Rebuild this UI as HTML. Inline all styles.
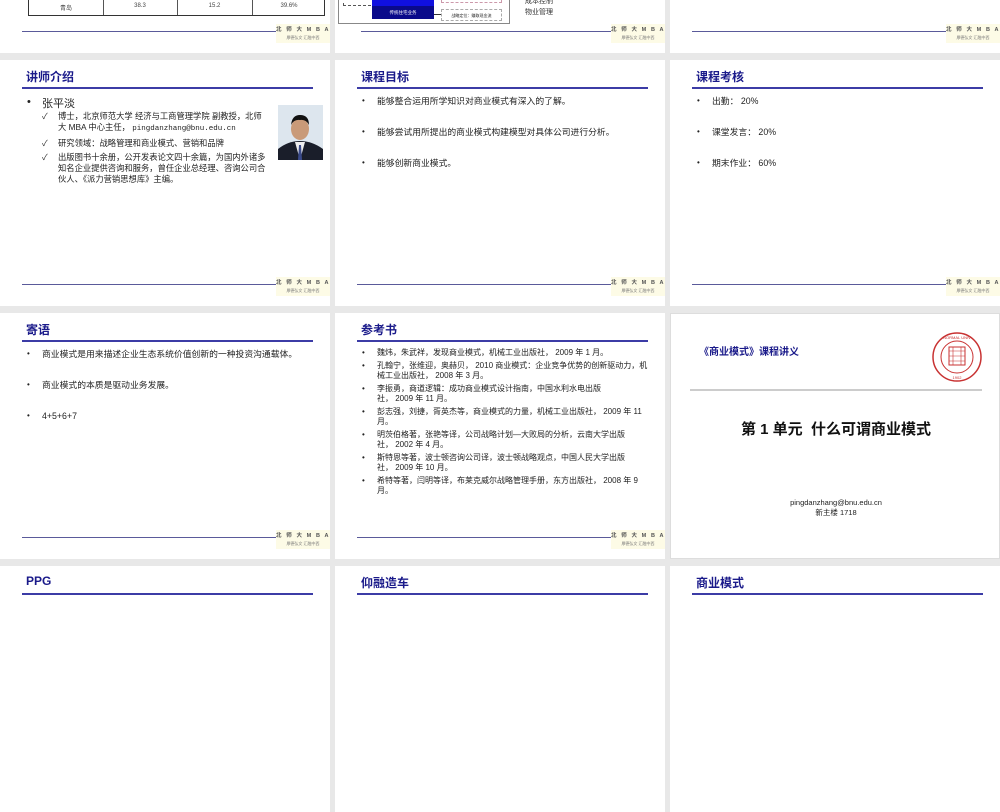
<!DOCTYPE html>
<html><head><meta charset="utf-8">
<style>
*{margin:0;padding:0;box-sizing:border-box}
html,body{width:1000px;height:600px;overflow:hidden;background:#e8e8e8;font-family:"Liberation Sans","Noto Sans CJK SC",sans-serif;color:#222}
.s{position:absolute;width:330px;height:246px;background:#fff;overflow:hidden}
.t{position:absolute;left:26px;top:8px;font-size:12px;font-weight:bold;color:#1a1a8a}
.hl{position:absolute;left:22px;top:27px;width:291px;height:2px;background:#3c3ca6}
.fl{position:absolute;left:22px;top:224px;width:256px;height:1px;background:#5a5a9a}
.logo{position:absolute;left:276px;top:217px;width:54px;height:19px;background:#fdfbe6;font-size:5.5px;font-weight:bold;color:#555;text-align:center;line-height:8px;white-space:nowrap;padding-top:2px;letter-spacing:1.6px}
.logo i{display:block;font-style:normal;font-size:4px;color:#777;font-weight:normal;letter-spacing:0}
.b{position:absolute;left:27px;font-size:8.8px;color:#222}
.b span{position:absolute;left:15px;width:285px;line-height:11px;white-space:nowrap}
.b::before{content:"•";position:absolute;left:0;top:0;font-size:8px}
.r{position:relative;padding-left:15px;margin-bottom:3px}
.r em{position:absolute;left:0;font-style:normal}
</style></head><body>

<!-- Row 0 -->
<div class="s" style="left:0;top:-193px">
  <div style="position:absolute;left:28px;top:193px;width:297px;height:16px;border:1px solid #333;border-top:none;font-size:6px;color:#444">
    <div style="position:absolute;left:74px;top:0;width:1px;height:15px;background:#555"></div>
    <div style="position:absolute;left:148px;top:0;width:1px;height:15px;background:#555"></div>
    <div style="position:absolute;left:223px;top:0;width:1px;height:15px;background:#555"></div>
    <div style="position:absolute;left:0;top:3px;width:74px;text-align:center">青岛</div>
    <div style="position:absolute;left:74px;top:3px;width:74px;text-align:center">38.3</div>
    <div style="position:absolute;left:148px;top:3px;width:75px;text-align:center">15.2</div>
    <div style="position:absolute;left:223px;top:3px;width:74px;text-align:center">39.6%</div>
  </div>
  <div class="fl"></div><div class="logo">北 师 大 M B A<i>厚德弘文 汇融中西</i></div>
</div>
<div class="s" style="left:335px;top:-193px">
  <div style="position:absolute;left:3px;top:180px;width:172px;height:37px;border:1px solid #888;border-top:none"></div>
  <div style="position:absolute;left:8px;top:190px;width:28px;height:9px;border-left:1px dashed #555;border-bottom:1px dashed #555"></div>
  <div style="position:absolute;left:37px;top:190px;width:62px;height:9px;background:#1010e0"></div>
  <div style="position:absolute;left:37px;top:199px;width:62px;height:13px;background:#0a0a8a;color:#fff;font-size:4.5px;text-align:center;line-height:13px">传统住宅业务</div>
  <div style="position:absolute;left:106px;top:190px;width:61px;height:6px;border:1px dashed #c9a;border-top:none"></div>
  <div style="position:absolute;left:106px;top:202px;width:61px;height:12px;border:1px dashed #aaa;font-size:4px;line-height:11px;text-align:center">战略定位：赚取现金流</div>
  <div style="position:absolute;left:99px;top:207px;width:7px;height:1px;background:#333"></div>
  <div style="position:absolute;left:190px;top:200px;font-size:7px;color:#333">物业管理</div>
  <div style="position:absolute;left:190px;top:189px;font-size:7px;color:#333">成本控制</div>
  <div class="fl" style="left:26px"></div><div class="logo">北 师 大 M B A<i>厚德弘文 汇融中西</i></div>
</div>
<div class="s" style="left:670px;top:-193px">
  <div class="fl"></div><div class="logo">北 师 大 M B A<i>厚德弘文 汇融中西</i></div>
</div>

<!-- Row 1 -->
<div class="s" style="left:0;top:60px">
  <div class="t">讲师介绍</div><div class="hl"></div>
  <div style="position:absolute;left:27px;top:36px;font-size:11px">•</div>
  <div style="position:absolute;left:42px;top:35px;font-size:11px">张平淡</div>
  <div style="position:absolute;left:42px;top:51px;font-size:8.3px;line-height:11px;width:226px">
    <div class="r" style="padding-left:16px"><em>✓</em>博士，北京师范大学 经济与工商管理学院 副教授，北师大 MBA 中心主任， <span style="font-family:'Liberation Mono',monospace;font-size:7.5px">pingdanzhang@bnu.edu.cn</span></div>
    <div class="r" style="padding-left:16px"><em>✓</em>研究领域：战略管理和商业模式、营销和品牌</div>
    <div class="r" style="padding-left:16px"><em>✓</em>出版图书十余册，公开发表论文四十余篇，为国内外诸多知名企业提供咨询和服务，曾任企业总经理、咨询公司合伙人、《派力营销思想库》主编。</div>
  </div>
  <svg style="position:absolute;left:278px;top:45px" width="45" height="55" viewBox="0 0 45 55">
    <rect width="45" height="55" fill="#dde6ee"/>
    <path d="M0 55 L0 44 Q10 36 22 36 Q34 36 45 44 L45 55Z" fill="#1a1e2a"/>
    <path d="M17 37 L22 55 L27 37Z" fill="#eee"/>
    <path d="M21 40 L23 40 L24 55 L20 55Z" fill="#3a4a8a"/>
    <ellipse cx="22" cy="24" rx="9" ry="11" fill="#c99a78"/>
    <path d="M13 20 Q14 10 22 10 Q31 10 31 20 Q28 14 22 15 Q16 14 13 20Z" fill="#111"/>
  </svg>
  <div class="fl"></div><div class="logo">北 师 大 M B A<i>厚德弘文 汇融中西</i></div>
</div>
<div class="s" style="left:335px;top:60px">
  <div class="t">课程目标</div><div class="hl"></div>
  <div class="b" style="top:36px"><span>能够整合运用所学知识对商业模式有深入的了解。</span></div>
  <div class="b" style="top:67px"><span>能够尝试用所提出的商业模式构建模型对具体公司进行分析。</span></div>
  <div class="b" style="top:98px"><span>能够创新商业模式。</span></div>
  <div class="fl"></div><div class="logo">北 师 大 M B A<i>厚德弘文 汇融中西</i></div>
</div>
<div class="s" style="left:670px;top:60px">
  <div class="t">课程考核</div><div class="hl"></div>
  <div class="b" style="top:36px"><span>出勤： 20%</span></div>
  <div class="b" style="top:67px"><span>课堂发言： 20%</span></div>
  <div class="b" style="top:98px"><span>期末作业： 60%</span></div>
  <div class="fl"></div><div class="logo">北 师 大 M B A<i>厚德弘文 汇融中西</i></div>
</div>

<!-- Row 2 -->
<div class="s" style="left:0;top:313px">
  <div class="t">寄语</div><div class="hl"></div>
  <div class="b" style="top:36px"><span>商业模式是用来描述企业生态系统价值创新的一种投资沟通载体。</span></div>
  <div class="b" style="top:67px"><span>商业模式的本质是驱动业务发展。</span></div>
  <div class="b" style="top:98px"><span>4+5+6+7</span></div>
  <div class="fl"></div><div class="logo">北 师 大 M B A<i>厚德弘文 汇融中西</i></div>
</div>
<div class="s" style="left:335px;top:313px">
  <div class="t">参考书</div><div class="hl"></div>
  <div style="position:absolute;left:27px;top:35px;font-size:8px;line-height:10px;width:292px">
    <div class="r"><em>•</em>魏炜，朱武祥，发现商业模式，机械工业出版社， 2009 年 1 月。</div>
    <div class="r"><em>•</em>孔翰宁，张维迎，奥赫贝， 2010 商业模式：企业竞争优势的创新驱动力，机械工业出版社， 2008 年 3 月。</div>
    <div class="r" style="width:250px"><em>•</em>李振勇，商道逻辑：成功商业模式设计指南，中国水利水电出版社， 2009 年 11 月。</div>
    <div class="r" style="width:282px"><em>•</em>彭志强，刘捷，胥英杰等，商业模式的力量，机械工业出版社， 2009 年 11 月。</div>
    <div class="r" style="width:272px"><em>•</em>明茨伯格著，张艳等译，公司战略计划—大败局的分析，云南大学出版社， 2002 年 4 月。</div>
    <div class="r" style="width:272px"><em>•</em>斯特恩等著，波士顿咨询公司译，波士顿战略观点，中国人民大学出版社， 2009 年 10 月。</div>
    <div class="r" style="width:282px"><em>•</em>希特等著，闫明等译，布莱克威尔战略管理手册，东方出版社， 2008 年 9 月。</div>
  </div>
  <div class="fl"></div><div class="logo">北 师 大 M B A<i>厚德弘文 汇融中西</i></div>
</div>
<div class="s" style="left:670px;top:313px;border:1px solid #ddd">
  <div style="position:absolute;left:28px;top:29px;font-size:10px;font-weight:bold;color:#1a1a8a">《商业模式》课程讲义</div>
  <svg style="position:absolute;left:260px;top:17px" width="52" height="52" viewBox="0 0 52 52">
    <circle cx="26" cy="26" r="24" fill="#fff" stroke="#c83232" stroke-width="1.5"/>
    <circle cx="26" cy="26" r="16" fill="none" stroke="#c83232" stroke-width="1"/>
    <rect x="18" y="16" width="16" height="18" fill="none" stroke="#c83232" stroke-width="1"/>
    <path d="M18 20 H34 M18 25 H34 M18 30 H34 M22 16 V34 M30 16 V34" stroke="#c83232" stroke-width="0.6"/>
    <text x="26" y="8" font-size="4" fill="#c83232" text-anchor="middle" font-family="Liberation Sans">NORMAL UNIV</text>
    <text x="26" y="48" font-size="4" fill="#c83232" text-anchor="middle" font-family="Liberation Sans">1902</text>
  </svg>
  <div style="position:absolute;left:19px;top:75px;width:292px;height:2px;background:#ccc"></div>
  <div style="position:absolute;left:0;top:104px;width:330px;text-align:center;font-size:15px;font-weight:bold;color:#111">第 1 单元&nbsp; 什么可谓商业模式</div>
  <div style="position:absolute;left:0;top:184px;width:330px;text-align:center;font-size:7.5px;line-height:10px;color:#222">pingdanzhang@bnu.edu.cn<br>新主楼 1718</div>
</div>

<!-- Row 3 -->
<div class="s" style="left:0;top:566px">
  <div class="t">PPG</div><div class="hl"></div>
</div>
<div class="s" style="left:335px;top:566px">
  <div class="t">仰融造车</div><div class="hl"></div>
</div>
<div class="s" style="left:670px;top:566px">
  <div class="t">商业模式</div><div class="hl"></div>
</div>
</body></html>
